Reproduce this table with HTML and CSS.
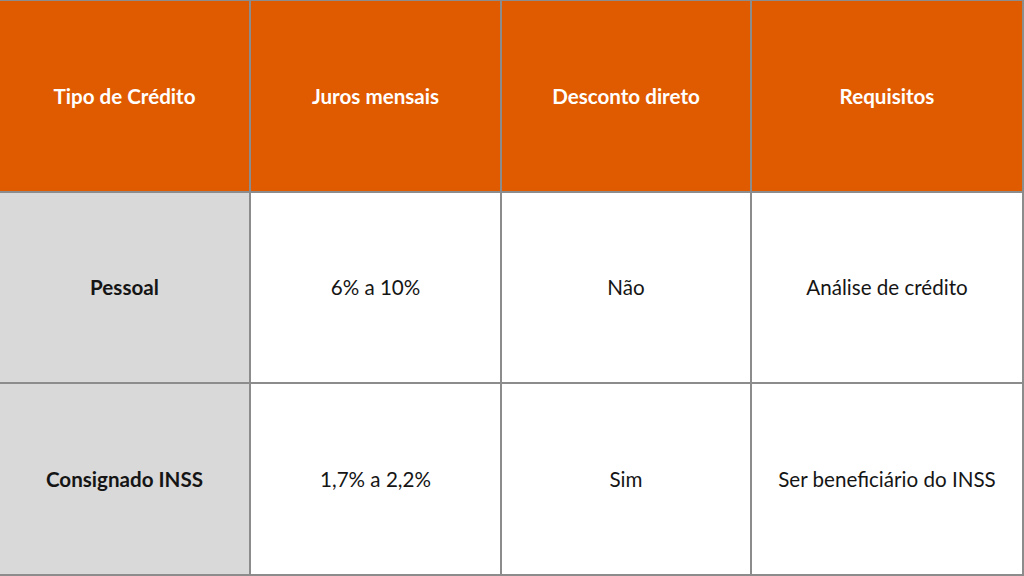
FILE: index.html
```html
<!DOCTYPE html>
<html lang="pt">
<head>
<meta charset="utf-8">
<link rel="stylesheet" href="styles.css">
</head>
<body>
<div class="table">
  <div class="cell head">Tipo de Crédito</div>
  <div class="cell head">Juros mensais</div>
  <div class="cell head">Desconto direto</div>
  <div class="cell head">Requisitos</div>
  <div class="cell label">Pessoal</div>
  <div class="cell">6% a 10%</div>
  <div class="cell">Não</div>
  <div class="cell">Análise de crédito</div>
  <div class="cell label">Consignado INSS</div>
  <div class="cell">1,7% a 2,2%</div>
  <div class="cell">Sim</div>
  <div class="cell">Ser beneficiário do INSS</div>
</div>
</body>
</html>
```
FILE: styles.css
```css
html, body {
  margin: 0;
  padding: 0;
}
body {
  width: 1024px;
  height: 576px;
  font-family: Lato, "Open Sans", sans-serif;
}
.table {
  box-sizing: border-box;
  width: 1024px;
  height: 576px;
  display: grid;
  grid-template-columns: 249px 249px 248px 1fr;
  grid-template-rows: repeat(3, 1fr);
  gap: 2px;
  background: #8c8c8c;
  padding: 1px 2px 2px 0;
}
.cell {
  display: flex;
  align-items: center;
  justify-content: center;
  background: #ffffff;
  color: #151515;
  font-size: 20.6px;
  text-align: center;
}
.head {
  background: #e05a00;
  color: #ffffff;
  font-weight: 700;
}
.label {
  background: #d9d9d9;
  font-weight: 700;
}
```
